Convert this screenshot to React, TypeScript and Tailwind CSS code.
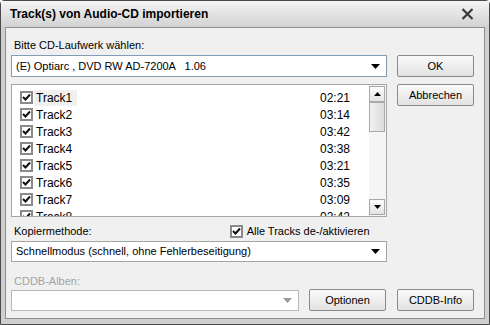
import React from "react";

const tracks = [
  { name: "Track1", time: "02:21" },
  { name: "Track2", time: "03:14" },
  { name: "Track3", time: "03:42" },
  { name: "Track4", time: "03:38" },
  { name: "Track5", time: "03:21" },
  { name: "Track6", time: "03:35" },
  { name: "Track7", time: "03:09" },
  { name: "Track8", time: "02:42" },
];

const font = "font-['Liberation_Sans',Arial,sans-serif]";

function Check({ className = "" }: { className?: string }) {
  return (
    <span
      className={`flex h-[13px] w-[13px] shrink-0 items-center justify-center border-2 border-[#8a8a8a] bg-white ${className}`}
    >
      <svg width="9" height="9" viewBox="0 0 9 9">
        <path d="M1 4 L3.5 6.5 L8 1.5" stroke="#111" strokeWidth="2" fill="none" />
      </svg>
    </span>
  );
}

function Arrow({ color = "#000" }: { color?: string }) {
  return (
    <svg width="9" height="5" viewBox="0 0 9 5">
      <path d="M0 0 H9 L4.5 5 Z" fill={color} />
    </svg>
  );
}

function Button({ label }: { label: string }) {
  return (
    <button className="flex h-[22px] w-[77px] items-center justify-center rounded-[2px] border border-[#8a8a8a] bg-gradient-to-b from-[#fafafa] to-[#e2e2e2] text-[11px] text-black">
      {label}
    </button>
  );
}

function ScrollBtn({ up }: { up?: boolean }) {
  return (
    <div className="flex h-[16px] w-[16px] items-center justify-center border border-[#a8a8a8] bg-gradient-to-b from-[#fbfbfb] to-[#e4e4e4]">
      <svg width="7" height="4" viewBox="0 0 7 4" className={up ? "rotate-180" : ""}>
        <path d="M0 0 H7 L3.5 4 Z" fill="#000" />
      </svg>
    </div>
  );
}

export default function App() {
  return (
    <div className={`h-[325px] w-[490px] overflow-hidden bg-white ${font}`}>
      <div className="flex h-[325px] w-[490px] flex-col rounded-t-[4px] border border-[#4a4a4a] bg-[#cfcfcf]">
        {/* title bar */}
        <div className="flex h-[26px] shrink-0 items-center justify-between bg-gradient-to-b from-[#f4f4f4] to-[#d2d2d2] pl-[9px] pr-[15px]">
          <span className="text-[12px] font-bold text-black">Track(s) von Audio-CD importieren</span>
          <svg width="13" height="12" viewBox="0 0 13 12">
            <path d="M1.5 1 L11.5 11 M11.5 1 L1.5 11" stroke="#3a3a3a" strokeWidth="2.2" />
          </svg>
        </div>

        {/* client */}
        <div className="mx-[4px] mb-[5px] flex flex-1 flex-col border border-[#8e8e8e] bg-[#f0f0f0] pl-[5px] pr-[8px] text-[11px] text-black">
          <div className="mt-[10px] h-[14px] leading-[14px] pl-[3px]">Bitte CD-Laufwerk wählen:</div>

          <div className="mt-[3px] flex gap-[10px]">
            <div className="flex h-[22px] w-[376px] items-center justify-between border border-[#7f9db9] bg-white pl-[4px] pr-[6px]">
              <span className="whitespace-pre">(E) Optiarc , DVD RW AD-7200A   1.06</span>
              <Arrow />
            </div>
            <Button label="OK" />
          </div>

          <div className="mt-[7px] flex gap-[10px]">
            <div className="flex h-[133px] w-[376px] border border-[#a5a5a5] bg-white">
              <div className="flex flex-1 flex-col overflow-hidden pl-[8px] pt-[4px]">
                {tracks.map((t, i) => (
                  <div key={t.name} className="flex h-[17px] shrink-0 items-center">
                    <Check />
                    <span
                      className={`ml-[1px] flex h-[16px] items-center pl-[2px] pr-[5px] text-[12px] ${i === 0 ? "bg-[#f0f0f0]" : ""}`}
                    >
                      {t.name}
                    </span>
                    <span className="ml-auto mr-[19px] text-[12px]">{t.time}</span>
                  </div>
                ))}
              </div>
              <div className="flex w-[17px] flex-col bg-[#f5f5f5] pt-[1px] pb-[1px]">
                <ScrollBtn up />
                <div className="h-[30px] w-[16px] border border-[#a8a8a8] bg-gradient-to-r from-[#f2f2f2] to-[#dcdcdc]" />
                <div className="flex-1" />
                <ScrollBtn />
              </div>
            </div>
            <Button label="Abbrechen" />
          </div>

          <div className="mt-[7px] flex h-[14px] w-[376px] items-center">
            <span className="pl-[3px]">Kopiermethode:</span>
            <Check className="ml-[138px]" />
            <span className="ml-[4px]">Alle Tracks de-/aktivieren</span>
          </div>

          <div className="mt-[3px] flex h-[21px] w-[376px] items-center justify-between border border-[#a5a5a5] bg-white pl-[4px] pr-[6px]">
            <span>Schnellmodus (schnell, ohne Fehlerbeseitigung)</span>
            <Arrow />
          </div>

          <div className="mt-[12px] h-[14px] pl-[3px] leading-[14px] text-[#a3a3a3]">CDDB-Alben:</div>

          <div className="mt-[1px] flex items-center">
            <div className="flex h-[21px] w-[288px] items-center justify-end border border-[#b8b8b8] bg-white pr-[6px]">
              <Arrow color="#9a9a9a" />
            </div>
            <div className="ml-[10px]">
              <Button label="Optionen" />
            </div>
            <div className="ml-[11px]">
              <Button label="CDDB-Info" />
            </div>
          </div>
        </div>
      </div>
    </div>
  );
}
